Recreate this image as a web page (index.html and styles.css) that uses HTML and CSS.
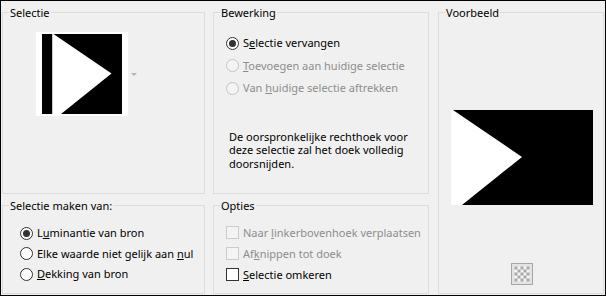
FILE: index.html
```html
<!DOCTYPE html>
<html lang="nl">
<head>
<meta charset="utf-8">
<title>Selectie</title>
<link rel="stylesheet" href="styles.css">
</head>
<body>
<div class="dialog">
  <fieldset class="group g-sel">
    <legend>Selectie</legend>
    <div class="thumb-row">
      <div class="thumb">
        <svg width="80" height="80" viewBox="0 0 80 80">
          <rect width="80" height="80" fill="#000"/>
          <polygon points="10,0 11.5,0 69.5,39.5 19,80 10,80" fill="#fff"/>
          <rect x="10" y="0" width="1" height="80" fill="#c8c8c8"/>
        </svg>
      </div>
      <span class="drop-arrow"></span>
    </div>
  </fieldset>

  <fieldset class="group g-edit">
    <legend>Bewerking</legend>
    <div class="choices choices-edit">
      <label class="choice"><span class="radio checked"></span><span>S<u>e</u>lectie vervangen</span></label>
      <label class="choice disabled"><span class="radio"></span><span><u>T</u>oevoegen aan huidige selectie</span></label>
      <label class="choice disabled"><span class="radio"></span><span>Van <u>h</u>uidige selectie aftrekken</span></label>
    </div>
    <p class="note">De oorspronkelijke rechthoek voor<br>deze selectie zal het doek volledig<br>doorsnijden.</p>
  </fieldset>

  <fieldset class="group g-prev">
    <legend>Voorbeeld</legend>
    <svg class="preview" width="142" height="95" viewBox="0 0 142 95">
      <rect width="142" height="95" fill="#000"/>
      <polygon points="0,0 2,0 71,47 11,95 0,95" fill="#fff"/>
    </svg>
    <span class="checker">
      <svg width="22" height="22" viewBox="0 0 22 22">
        <rect x="0.5" y="0.5" width="21" height="21" fill="#e3e3e3" stroke="#a6a6a6"/>
        <rect x="3.5" y="3.5" width="15" height="15" fill="#f4f4f4"/>
        <g fill="#a9a9a9">
          <rect x="3.5" y="3.5" width="3" height="3"/><rect x="9.5" y="3.5" width="3" height="3"/><rect x="15.5" y="3.5" width="3" height="3"/>
          <rect x="6.5" y="6.5" width="3" height="3"/><rect x="12.5" y="6.5" width="3" height="3"/>
          <rect x="3.5" y="9.5" width="3" height="3"/><rect x="9.5" y="9.5" width="3" height="3"/><rect x="15.5" y="9.5" width="3" height="3"/>
          <rect x="6.5" y="12.5" width="3" height="3"/><rect x="12.5" y="12.5" width="3" height="3"/>
          <rect x="3.5" y="15.5" width="3" height="3"/><rect x="9.5" y="15.5" width="3" height="3"/><rect x="15.5" y="15.5" width="3" height="3"/>
        </g>
      </svg>
    </span>
  </fieldset>

  <fieldset class="group g-src">
    <legend>Selectie maken van:</legend>
    <div class="choices choices-src">
      <label class="choice"><span class="radio checked"></span><span>L<u>u</u>minantie van bron</span></label>
      <label class="choice"><span class="radio"></span><span>Elke waarde niet gelijk aan <u>n</u>ul</span></label>
      <label class="choice"><span class="radio"></span><span><u>D</u>ekking van bron</span></label>
    </div>
  </fieldset>

  <fieldset class="group g-opt">
    <legend>Opties</legend>
    <div class="choices choices-opt">
      <label class="choice disabled"><span class="check"></span><span>Naar <u>l</u>inkerbovenhoek verplaatsen</span></label>
      <label class="choice disabled"><span class="check"></span><span>Af<u>k</u>nippen tot doek</span></label>
      <label class="choice"><span class="check"></span><span><u>S</u>electie omkeren</span></label>
    </div>
  </fieldset>
</div>
</body>
</html>
```

FILE: styles.css
```css
html, body {
  margin: 0;
  padding: 0;
  background: #f0f0f0;
}

body {
  font-family: "Noto Sans", "Open Sans", sans-serif;
  font-size: 11px;
  color: #000;
}

.dialog {
  box-sizing: border-box;
  width: 606px;
  height: 296px;
  border: 1px solid #000;
  padding: 3px 1px 1px 1px;
  display: grid;
  grid-template-columns: 203px 216px 167px;
  grid-template-rows: 190px 97px;
  column-gap: 8px;
  row-gap: 3px;
}

.group {
  margin: 0;
  padding: 0;
  min-width: 0;
  border: 1px solid #dcdcdc;
  box-sizing: border-box;
}

.group legend {
  margin-left: 6px;
  padding: 0 1px;
  line-height: 17px;
  height: 17px;
}

.g-sel { grid-column: 1; grid-row: 1; }
.g-edit { grid-column: 2; grid-row: 1; }
.g-prev {
  grid-column: 3;
  grid-row: 1 / span 2;
  margin-left: 1px;
  display: flex;
  flex-direction: column;
  align-items: flex-start;
}
.g-src { grid-column: 1; grid-row: 2; }
.g-opt { grid-column: 2; grid-row: 2; }

/* Selectie thumbnail */
.thumb-row {
  display: flex;
  align-items: center;
  margin: 11px 0 0 33px;
}

.thumb {
  background: #fff;
  padding: 2px 6px;
  width: 80px;
  height: 80px;
}

.thumb svg { display: block; }

.drop-arrow {
  margin-left: 3px;
  width: 0;
  height: 0;
  border-left: 3px solid transparent;
  border-right: 3px solid transparent;
  border-top: 3px solid #b4b4b4;
}

/* choices */
.choices {
  display: flex;
  flex-direction: column;
}

.choices-edit { margin: 14px 0 0 12px; gap: 6.5px; }
.choices-src { margin: 11px 0 0 17px; gap: 4.5px; }
.choices-opt { margin: 10.5px 0 0 12px; gap: 5px; }

.choice {
  display: flex;
  align-items: center;
  gap: 4px;
  height: 16px;
  line-height: 16px;
  white-space: nowrap;
}

.choice.disabled { color: #8d8d8d; }

.radio {
  box-sizing: border-box;
  width: 13px;
  height: 13px;
  border: 1px solid #333;
  border-radius: 50%;
  background: #fff;
  display: flex;
  align-items: center;
  justify-content: center;
  flex: none;
}

.radio.checked::after {
  content: "";
  width: 7px;
  height: 7px;
  border-radius: 50%;
  background: #333;
}

.disabled .radio {
  border-color: #c4c4c4;
  background: #f4f4f4;
}

.check {
  box-sizing: border-box;
  width: 13px;
  height: 13px;
  border: 1px solid #333;
  background: #fff;
  flex: none;
}

.disabled .check {
  border-color: #cccccc;
  background: #f4f4f4;
}

.note {
  margin: 33.5px 0 0 15px;
  line-height: 13.5px;
  white-space: nowrap;
}

/* preview */
.preview {
  display: block;
  margin: 89px 0 0 12px;
}

.checker {
  display: block;
  margin: 58px 0 0 72px;
  width: 22px;
  height: 22px;
}

.checker svg { display: block; }
```
